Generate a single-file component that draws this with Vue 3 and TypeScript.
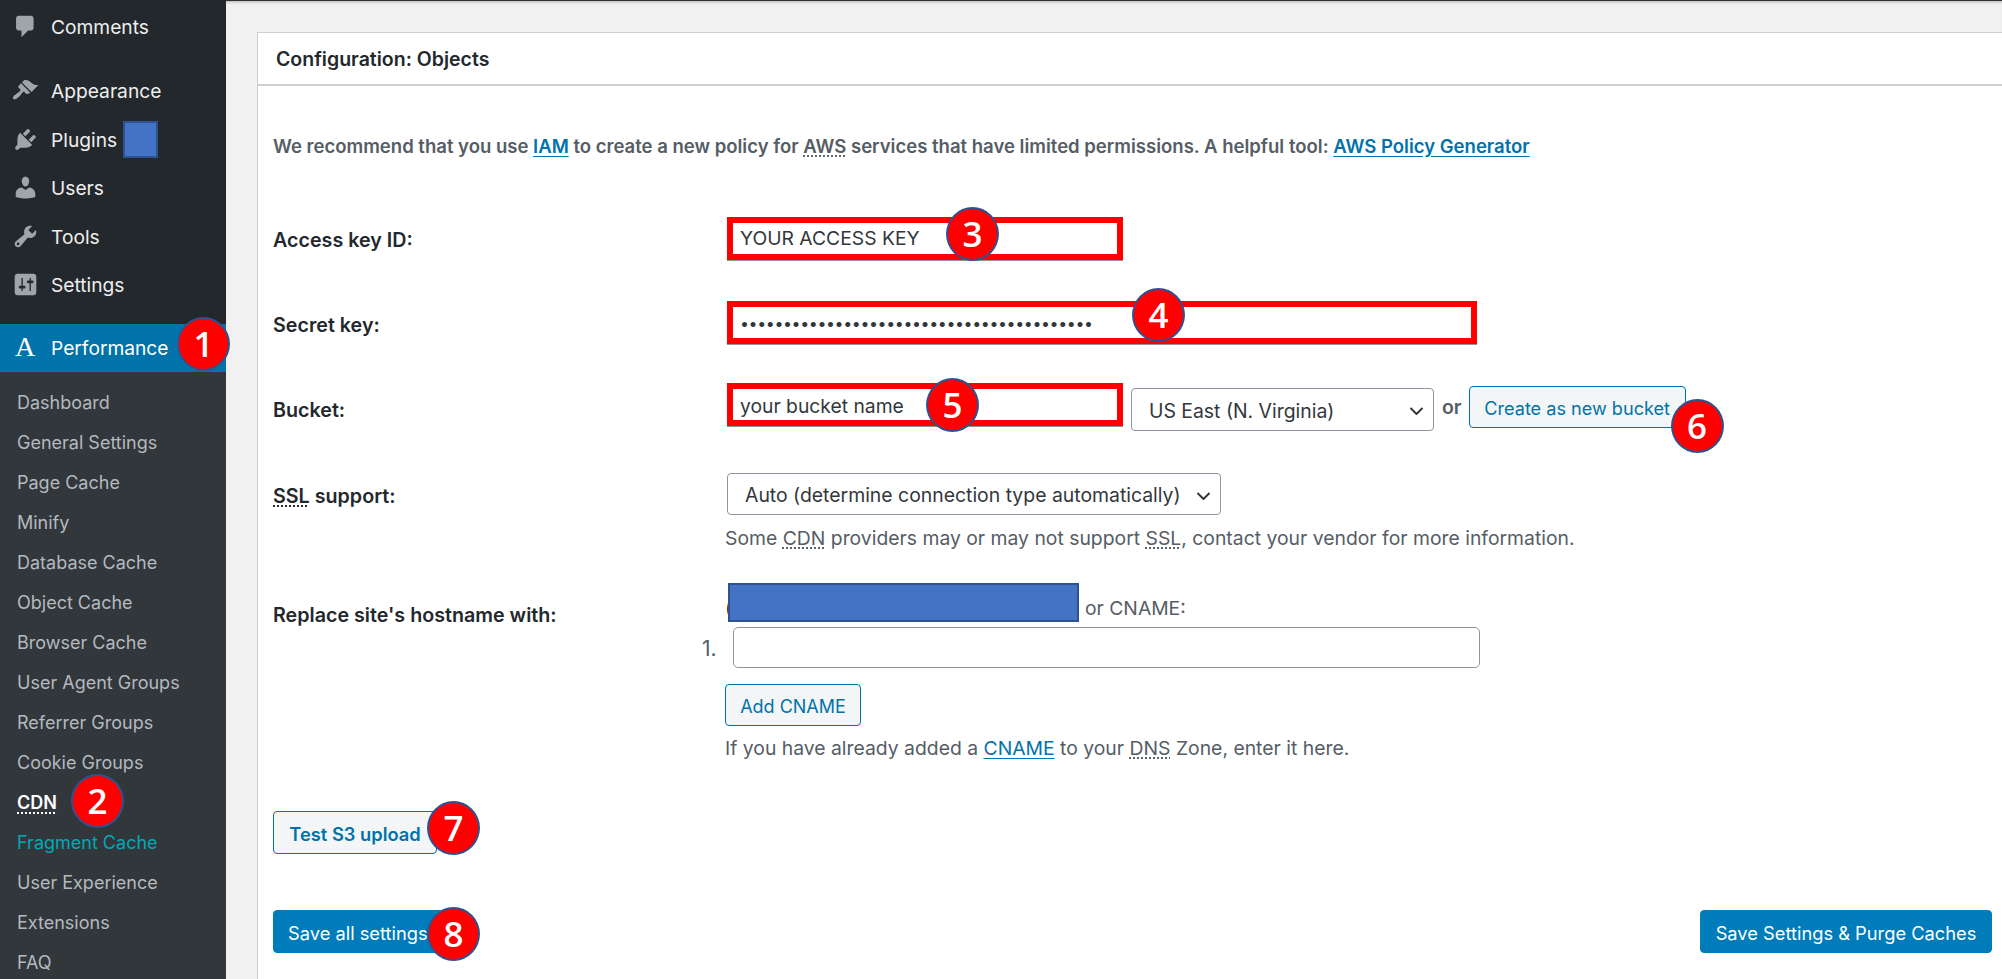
<script setup lang="ts">
interface MainItem {
    label: string
    path: string
    gapBefore?: boolean
}
const mainItems: MainItem[] = [
    { label: 'Comments', path: 'M5 2h9c1.1 0 2 .9 2 2v7c0 1.1-.9 2-2 2h-2l-5 5v-5H5c-1.1 0-2-.9-2-2V4c0-1.1.9-2 2-2z' },
    { label: 'Appearance', gapBefore: true, path: 'M14.48 11.06L7.41 3.99l1.5-1.5c.5-.56 2.3-.47 3.51.32 1.21.8 1.43 1.28 2.91 2.1 1.18.64 2.45 1.26 4.45.85zm-.71.71L6.7 4.7 4.93 6.47c-.39.39-.39 1.02 0 1.41l1.06 1.06c.39.39.39 1.03 0 1.42-.6.6-1.43 1.11-2.21 1.69-.35.26-.7.53-1.01.84C1.43 13.23.1 15.39 1 16.3c.91.9 3.07-.43 4.4-1.77.31-.31.58-.66.84-1.01.58-.78 1.09-1.61 1.69-2.21.39-.39 1.03-.39 1.42 0l1.06 1.06c.39.39 1.02.39 1.41 0z' },
    { label: 'Plugins', path: 'M13.11 4.36L9.87 7.6 8 5.73l3.24-3.24c.35-.34 1.05-.2 1.56.32.52.51.66 1.21.31 1.55zm-8 1.77l.91-1.12 9.01 9.01-1.19.84c-.71.71-2.63 1.16-3.82 1.16H6.14L4.9 17.26c-.59.59-1.54.59-2.12 0-.59-.58-.59-1.53 0-2.12l1.24-1.24v-3.88c0-1.13.4-3.19 1.09-3.89zm7.26 3.97l3.24-3.24c.34-.35 1.04-.21 1.55.31.52.51.66 1.21.31 1.55l-3.24 3.25z' },
    { label: 'Users', path: 'M10 9.25c-2.27 0-2.73-3.44-2.73-3.44C7 4.02 7.82 2 9.97 2c2.16 0 2.98 2.02 2.71 3.81 0 0-.41 3.44-2.68 3.44zm0 2.57L12.72 10c2.39 0 4.52 2.33 4.52 4.53v2.49s-3.65 1.13-7.24 1.13c-3.65 0-7.24-1.13-7.24-1.13v-2.49c0-2.25 1.94-4.48 4.47-4.48z' },
    { label: 'Tools', path: 'M16.68 9.77c-1.34 1.34-3.3 1.67-4.95.99l-5.41 6.52c-.99.99-2.59.99-3.58 0s-.99-2.59 0-3.57l6.52-5.42c-.68-1.65-.35-3.61.99-4.95 1.28-1.28 3.12-1.62 4.72-1.06l-2.89 2.89 2.82 2.82 2.86-2.87c.53 1.58.18 3.39-1.08 4.67zM3.81 16.21c.4.39 1.04.39 1.43 0 .4-.4.4-1.04 0-1.43-.39-.4-1.03-.4-1.43 0-.39.39-.39 1.03 0 1.43z' },
    { label: 'Settings', path: 'M18 16V4c0-1.1-.9-2-2-2H4c-1.1 0-2 .9-2 2v12c0 1.1.9 2 2 2h12c1.1 0 2-.9 2-2zM8 11h1c.55 0 1 .45 1 1s-.45 1-1 1H8v1.5c0 .28-.22.5-.5.5s-.5-.22-.5-.5V13H6c-.55 0-1-.45-1-1s.45-1 1-1h1V5.5c0-.28.22-.5.5-.5s.5.22.5.5V11zm5-2h-1c-.55 0-1-.45-1-1s.45-1 1-1h1V5.5c0-.28.22-.5.5-.5s.5.22.5.5V7h1c.55 0 1 .45 1 1s-.45 1-1 1h-1v5.5c0 .28-.22.5-.5.5s-.5-.22-.5-.5V9z' },
]
const subItems = [
    'Dashboard', 'General Settings', 'Page Cache', 'Minify', 'Database Cache', 'Object Cache',
    'Browser Cache', 'User Agent Groups', 'Referrer Groups', 'Cookie Groups', 'CDN',
    'Fragment Cache', 'User Experience', 'Extensions', 'FAQ',
]
const secret = '•'.repeat(41)
</script>

<template>
    <div class="page">
        <aside class="sidebar">
            <ul class="menu">
                <li v-for="item in mainItems" :key="item.label" class="menu_item" :class="{ 'menu_item--gap': item.gapBefore }">
                    <svg class="menu_icon" viewBox="0 0 20 20"><path :d="item.path" /></svg>
                    <span>{{ item.label }}</span>
                    <span v-if="item.label === 'Plugins'" class="redact redact--plugin"></span>
                </li>
                <li class="menu_item menu_item--current">
                    <span class="menu_a">A</span>
                    <span>Performance</span>
                    <span class="badge badge--1">1</span>
                </li>
            </ul>
            <ul class="submenu">
                <li
                    v-for="name in subItems"
                    :key="name"
                    class="submenu_item"
                    :class="{ 'submenu_item--current': name === 'CDN', 'submenu_item--teal': name === 'Fragment Cache' }"
                >
                    {{ name }}
                    <span v-if="name === 'CDN'" class="badge badge--2">2</span>
                </li>
            </ul>
        </aside>

        <main class="content">
            <section class="panel">
                <h3 class="panel_title">Configuration: Objects</h3>
                <div class="panel_body">
                    <p class="intro">
                        We recommend that you use <a class="link link--abbr">IAM</a> to create a new policy for
                        <abbr>AWS</abbr> services that have limited permissions. A helpful tool:
                        <a class="link">AWS Policy Generator</a>
                    </p>

                    <div class="row row--access">
                        <label class="row_label">Access key ID:</label>
                        <div class="field">
                            <input class="input input--red input--short input--access" value="YOUR ACCESS KEY" />
                            <span class="badge badge--3">3</span>
                        </div>
                    </div>

                    <div class="row row--secret">
                        <label class="row_label">Secret key:</label>
                        <div class="field">
                            <input class="input input--red input--long input--pass" type="password" :value="secret" />
                            <span class="badge badge--4">4</span>
                        </div>
                    </div>

                    <div class="row row--bucket">
                        <label class="row_label">Bucket:</label>
                        <div class="bucket">
                            <div class="field">
                                <input class="input input--red input--short input--bucket" value="your bucket name" />
                                <span class="badge badge--5">5</span>
                            </div>
                            <div class="select select--region">
                                <select><option>US East (N. Virginia)</option></select>
                                <svg viewBox="0 0 14 8"><path d="M1 1l6 6 6-6" /></svg>
                            </div>
                            <b class="or">or</b>
                            <div class="field">
                                <button class="btn btn--bucket">Create as new bucket</button>
                                <span class="badge badge--6">6</span>
                            </div>
                        </div>
                    </div>

                    <div class="row row--ssl">
                        <label class="row_label"><abbr>SSL</abbr> support:</label>
                        <div>
                            <div class="select select--ssl">
                                <select><option>Auto (determine connection type automatically)</option></select>
                                <svg viewBox="0 0 14 8"><path d="M1 1l6 6 6-6" /></svg>
                            </div>
                            <p class="help help--ssl">
                                Some <abbr>CDN</abbr> providers may or may not support <abbr>SSL</abbr>, contact your
                                vendor for more information.
                            </p>
                        </div>
                    </div>

                    <div class="row row--host">
                        <label class="row_label">Replace site's hostname with:</label>
                        <div>
                            <div class="hostline">
                                <span class="peek">(</span>
                                <span class="redact redact--host"></span>
                                <span class="hostline_or">or CNAME:</span>
                            </div>
                            <ol class="cnames">
                                <li><span class="cnames_num">1.</span><input class="input input--cname" /></li>
                            </ol>
                            <button class="btn btn--cname">Add CNAME</button>
                            <p class="help help--cname">
                                If you have already added a <a class="link link--plain">CNAME</a> to your
                                <abbr>DNS</abbr> Zone, enter it here.
                            </p>
                        </div>
                    </div>

                    <div class="test">
                        <button class="btn btn--test">Test S3 upload</button>
                        <span class="badge badge--7">7</span>
                    </div>

                    <div class="actions">
                        <div class="field">
                            <button class="btn btn--primary btn--saveall">Save all settings</button>
                            <span class="badge badge--8">8</span>
                        </div>
                        <button class="btn btn--primary btn--purge">Save Settings &amp; Purge Caches</button>
                    </div>
                </div>
            </section>
        </main>
    </div>
</template>

<style scoped>
.page {
    display: flex;
    height: 979px;
    overflow: hidden;
    font-family: Inter, "Noto Sans", sans-serif;
    background: #f1f1f1;
}

/* sidebar */
.sidebar {
    flex: 0 0 226px;
    background: #32373c;
    position: relative;
    z-index: 2;
}
.menu {
    list-style: none;
    margin: 0;
    padding: 3px 0 0;
    background: #23282d;
}
.menu_item {
    position: relative;
    display: flex;
    align-items: center;
    height: 48.5px;
    padding-left: 51px;
    color: #eeeeee;
    font-size: 19.2px;
}
.menu_item:first-child {
    height: 48px;
}
.menu_item--gap {
    margin-top: 16px;
}
.menu_item--current {
    height: 48px;
    margin-top: 14.5px;
    background: #0073aa;
    color: #fff;
}
.menu_icon {
    position: absolute;
    left: 12px;
    top: 10px;
    width: 27px;
    height: 27px;
    fill: #a0a5aa;
}
.menu_a {
    position: absolute;
    left: 15px;
    top: 7px;
    font-family: "Liberation Serif", serif;
    font-size: 28px;
    line-height: 32px;
}
.submenu {
    list-style: none;
    margin: 0;
    padding: 11px 0 0;
}
.submenu_item {
    position: relative;
    height: 40px;
    line-height: 40px;
    padding-left: 17px;
    font-size: 18px;
    color: #b4b9be;
}
.submenu_item--current {
    color: #fff;
    font-weight: 600;
    text-decoration: underline dotted;
    text-underline-offset: 4px;
}
.submenu_item--teal {
    color: #00a9b5;
}
.redact {
    display: block;
    background: #4472c4;
    border: 2px solid #2f528f;
    box-sizing: border-box;
}
.redact--plugin {
    width: 35px;
    height: 37px;
    margin-left: 6px;
}

/* annotation badges */
.badge {
    position: absolute;
    z-index: 5;
    box-sizing: border-box;
    width: 53px;
    height: 54px;
    border: 2px solid #2f528f;
    border-radius: 50%;
    background: #ff0000;
    color: #fff;
    font-family: "Open Sans", sans-serif;
    font-size: 35px;
    font-weight: 600;
    line-height: 49px;
    text-align: center;
    text-decoration: none;
}
.badge--1 { left: 177px; top: -7px; }
.badge--2 { left: 71px; top: -9px; }
.badge--3 { left: 220px; top: -10px; }
.badge--4 { left: 406px; top: -13px; }
.badge--5 { left: 200px; top: -5px; }
.badge--6 { left: 202px; top: 16px; }
.badge--7 { left: 154px; top: -10px; }
.badge--8 { left: 154px; top: -3px; }

/* main area */
.content {
    flex: 1;
    min-width: 0;
    box-sizing: border-box;
    padding: 31px 0 0 31px;
    border-top: 1px solid #2c3338;
    box-shadow: inset 0 3px 3px -2px rgba(0, 0, 0, 0.25);
}
.panel {
    height: 1000px;
    background: #fff;
    border: 1px solid #ccd0d4;
    border-right: none;
}
.panel_title {
    margin: 0;
    height: 51px;
    line-height: 52px;
    padding-left: 18px;
    font-size: 19.5px;
    font-weight: 600;
    color: #23282d;
    border-bottom: 2px solid #ccd0d4;
}
.panel_body {
    padding: 0 10px 0 15px;
    color: #23282d;
}
.intro {
    margin: 49px 0 0;
    height: 22px;
    line-height: 22px;
    font-size: 18.53px;
    font-weight: 600;
    color: #555d66;
    white-space: nowrap;
}
abbr {
    text-decoration: underline dotted;
    text-underline-offset: 3px;
}
.link {
    color: #0073aa;
    text-decoration: underline;
    text-underline-offset: 3px;
}
.link--abbr {
    text-decoration-style: solid;
}
.link--plain {
    font-weight: 400;
}

/* form rows */
.row {
    display: grid;
    grid-template-columns: 453px 1fr;
}
.row_label {
    font-size: 19.7px;
    font-weight: 600;
    line-height: 22px;
    color: #23282d;
}
.row--access { margin-top: 60px; }
.row--access .row_label { margin-top: 12px; }
.row--secret { margin-top: 41px; }
.row--secret .row_label { margin-top: 13px; }
.row--bucket { margin-top: 39px; }
.row--bucket .row_label { margin-top: 16px; }
.row--ssl { margin-top: 42px; }
.row--ssl .row_label { margin-top: 12px; }
.row--host { margin-top: 34px; }
.row--host .row_label { margin-top: 21px; }

.field {
    position: relative;
    display: inline-block;
    vertical-align: top;
}
.input {
    display: block;
    box-sizing: border-box;
    height: 43px;
    padding: 0 7px;
    font-family: inherit;
    font-size: 19.3px;
    color: #32373c;
    background: #fff;
    outline: none;
}
.input--red {
    border: 6px solid #ff0000;
    border-radius: 0;
    box-shadow: 0 1px 0 #8d96a0;
    margin-left: 1px;
}
.input--short { width: 396px; }
.input--long { width: 750px; }
.input--access { padding-bottom: 2px; }
.input--bucket { padding-top: 3px; }
.input--pass {
    letter-spacing: -0.4px;
    font-size: 16px;
}
.input--cname {
    width: 747px;
    height: 41px;
    border: 1px solid #8d96a0;
    border-radius: 5px;
}
.bucket {
    display: flex;
    align-items: flex-start;
}
.select {
    position: relative;
}
.select select {
    display: block;
    appearance: none;
    box-sizing: border-box;
    height: 43px;
    width: 100%;
    padding: 2px 0 0 17px;
    font-family: inherit;
    font-size: 19.4px;
    color: #32373c;
    background: #fff;
    border: 1px solid #8d96a0;
    border-radius: 4px;
}
.select svg {
    position: absolute;
    right: 10px;
    top: 19px;
    width: 15px;
    height: 8px;
    fill: none;
    stroke: #32373c;
    stroke-width: 2;
}
.select--region {
    width: 303px;
    margin: 5px 0 0 8px;
}
.select--ssl {
    width: 494px;
    margin-left: 1px;
}
.select--ssl select {
    height: 42px;
}
.or {
    margin: 13px 7px 0 8px;
    font-size: 19.5px;
    font-weight: 600;
    line-height: 22px;
    color: #555d66;
}
.help {
    margin: 0;
    font-size: 19.35px;
    line-height: 22px;
    color: #555d66;
    white-space: nowrap;
}
.help--ssl { margin-top: 12px; margin-left: -1px; }
.help--cname { margin-top: 11px; margin-left: -1px; }
.hostline {
    display: flex;
    align-items: flex-end;
    height: 39px;
    font-size: 19.3px;
    color: #555d66;
}
.peek {
    line-height: 22px;
    margin: 0 0 3px -1px;
    color: #23282d;
}
.redact--host {
    width: 351px;
    height: 39px;
    margin-left: -4px;
    position: relative;
}
.hostline_or {
    margin: 0 0 3px 6px;
    line-height: 22px;
}
.cnames {
    list-style: none;
    margin: 5px 0 0;
    padding: 0 0 0 7px;
}
.cnames li {
    position: relative;
    color: #555d66;
}
.cnames_num {
    position: absolute;
    left: -31px;
    top: 11px;
    font-size: 21px;
    line-height: 22px;
}

/* buttons */
.btn {
    display: block;
    box-sizing: border-box;
    height: 42px;
    padding: 2px 14px 0;
    font-family: inherit;
    font-size: 18.3px;
    color: #0073aa;
    background: #f3f5f6;
    border: 1px solid #0073aa;
    border-radius: 4px;
    white-space: nowrap;
}
.btn--bucket { width: 217px; margin-top: 3px; font-size: 18.1px; }
.btn--cname { width: 136px; margin: 16px 0 0 -1px; font-size: 18px; }
.btn--test {
    width: 164px;
    height: 43px;
    font-weight: 600;
}
.btn--primary {
    height: 43px;
    color: #fff;
    background: #007cba;
    border-color: #007cba;
}
.btn--saveall { width: 170px; text-align: left; }
.btn--purge { width: 292px; }
.test {
    position: relative;
    margin-top: 52px;
    height: 43px;
}
.actions {
    display: flex;
    justify-content: space-between;
    margin-top: 56px;
}
</style>

<style>
html,
body {
    margin: 0;
    background: #f1f1f1;
    overflow: hidden;
}
</style>
